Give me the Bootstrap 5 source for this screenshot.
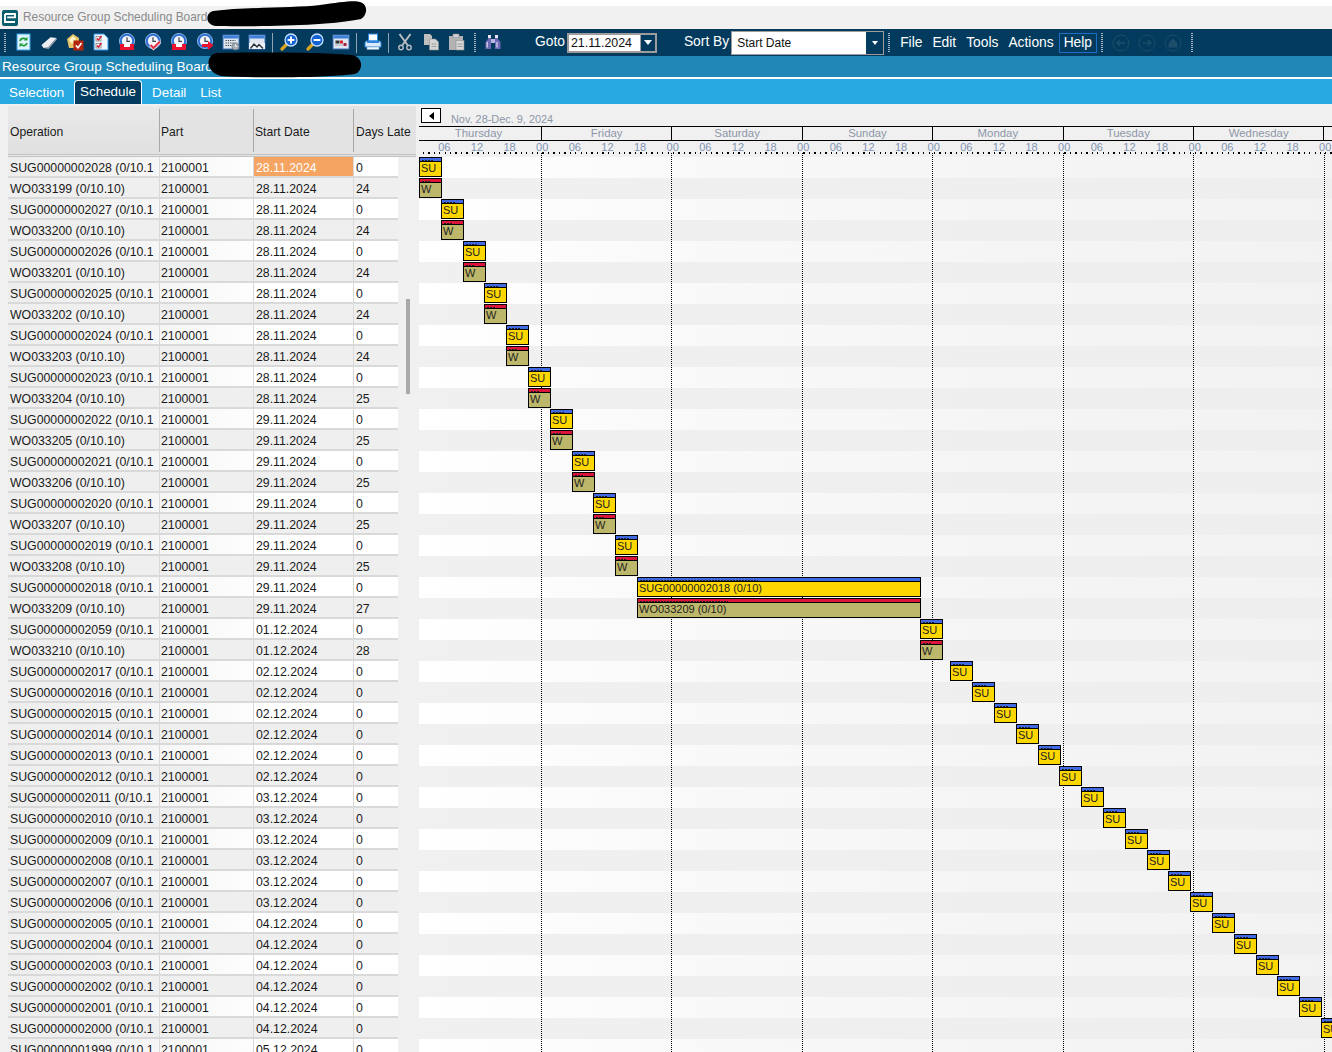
<!DOCTYPE html>
<html lang="en"><head><meta charset="utf-8"><title>Resource Group Scheduling Board</title>
<link href="https://cdn.jsdelivr.net/npm/bootstrap@5.3.0/dist/css/bootstrap.min.css" rel="stylesheet">
<style>
html,body{height:1052px;overflow:hidden}
body{background:#f0f0f0;font-family:"Liberation Sans",Arial,sans-serif;font-size:12px;color:#111;position:relative}
.topgap{height:6px;background:#fff}
.titlebar{height:23px;background:#f1f1f1;color:#8a8a8a;font-size:11.9px;padding-left:2px;gap:5px}
.titlebar span{padding-top:1px}
.toolbar{height:27px;background:#023b5e;color:#fff;font-size:13.8px;white-space:nowrap}
.grip{width:2px;height:20px;flex:none;background:repeating-linear-gradient(#aab8c4 0 1px,transparent 1px 2px)}
.tsep{width:1px;height:20px;background:#8fa3b2;flex:none;margin:0 3px 0 2px}
.tbtn{width:26px;flex:none;display:flex;justify-content:center}
.tbtn svg{width:18px;height:18px}
.gotobox{width:90px;height:20px;border:2px solid #9c9c9c;background:#fff;color:#111;font-size:12.4px;margin-left:2px}
.gotobox span.val{flex:1;padding-left:2px;line-height:16px}
.ddbtn{width:15px;background:#023b5e;display:flex;align-items:center;justify-content:center;border-left:1px solid #9c9c9c}
.ddbtn i{display:block;border:4px solid transparent;border-top:5px solid #fff;border-bottom:0}
.sortbox{width:153px;height:24px;border:1px solid #9c9c9c;background:#fff;color:#111;font-size:12px;margin-left:2px}
.sortbox span.val{flex:1;padding-left:5px;line-height:23px}
.sortbox .ddbtn{width:17px;border:0}
.sortbox .ddbtn i{border-width:3px;border-top-width:4px}
.mnu{padding:0 5px;line-height:20px}
.mnu.first{margin-left:-1px}
.mnu.hot{border:1px solid #1a6fc4;padding:0 4px;margin-left:0;line-height:18px}
.band{height:21px;background:#2187b7;color:#fff;font-size:13.6px;line-height:21px;padding-left:2px}
.whiteline{height:2px;background:#fff}
.tabbar{height:25px;background:#29a9e2;color:#fff;font-size:13.4px;padding-left:4px}
.tabbar .tabi{padding:5px 5px 0;line-height:18px}
.tabbar .tabi.on{background:#023b5e;border:1px solid #fff;border-bottom:0;border-radius:4px 4px 0 0;padding:1px 5px 0;line-height:20px;margin:1px 5px 0 5px;width:68px}
.tabbar .tabi.lastt{margin-left:4px}
.mainarea{height:948px;overflow:hidden}
.leftpane{width:408px;margin-left:8px;flex:none;position:relative}
.gridtbl{table-layout:fixed;width:408px;margin:2px 0 0;border-collapse:separate;border-spacing:0;--bs-table-bg:transparent;font-size:12.3px;color:#1a1a1a}
.gridtbl>*>*>*{white-space:nowrap;overflow:hidden;box-shadow:none}
.gridtbl thead th.hcell{height:51px;padding:4px 0 0 2px;background:#e3e3e3;font-weight:400;font-size:12.15px;vertical-align:middle;position:relative;border:0;border-bottom:3px double #c2c2c2}
.gridtbl thead th.hcell:first-child{background:linear-gradient(#e9e9e9,#e0e0e0)}
.gridtbl thead th.hcell:last-child{padding-left:3px}
.gridtbl thead th.hcell+th::before{content:"";position:absolute;left:0;top:3px;bottom:2px;width:1px;background:#a8a8a8}
.gridtbl tbody td{height:21px;line-height:16px;padding:3px 0 0 2px;border:0;border-bottom:2px solid #d9d9d9;border-left:1px solid #d9d9d9;color:#1a1a1a}
.gridtbl tbody td:first-child{border-left:0}
.gridtbl tbody td:nth-child(2){padding-left:1px}
.gridtbl tbody tr:nth-child(odd) td{background:#fff}
.gridtbl tbody tr:nth-child(odd) td:first-child{background:linear-gradient(90deg,#ededed,#f6f6f6)}
.gridtbl tbody tr:nth-child(odd) td:nth-child(2){background:linear-gradient(90deg,#f6f6f6,#fdfdfd)}
.gridtbl tbody tr:nth-child(even) td{background:#efefef}
.gridtbl tbody td.hotcell,.gridtbl tbody tr:nth-child(odd) td.hotcell{background:#f5a561;color:#fff}
.gridtbl tbody tr>td.blank,.gridtbl tbody tr:nth-child(odd) td.blank,.gridtbl tbody tr:nth-child(even) td.blank{background:#f0f0f0;border:0}
.vthumb{position:absolute;left:398px;top:195px;width:4px;height:95px;background:#a9a9a9}
.chartpane{width:913px;flex:none;margin-left:3px;overflow:hidden;position:relative}
.charttop{height:22px;padding-top:4px;gap:10px;color:#8d96a8;font-size:10.9px}
.backbtn{width:20px;height:15px;margin-left:2px;background:#fff;border:1px solid #000;display:flex;align-items:center;justify-content:center}
.backbtn i{display:block;border:4px solid transparent;border-right:5px solid #000;border-left:0}
.daterange{padding-top:4px;line-height:14px}
.dayrow{height:15px;border-top:1px solid #000;border-bottom:1px solid #000;color:#8d96a8;font-size:11.4px;line-height:13px;white-space:nowrap}
.dayc{flex:0 0 130.4px;text-align:center;border-left:1px solid #000}
.dayc.first{flex:0 0 122px;border-left:0;padding-right:3px}
.hrrow{height:11px;padding-left:9px;color:#7f94b4;font-size:11px;line-height:12px;white-space:nowrap}
.hrc{flex:0 0 32.625px;text-align:center}
.tickrow{height:2px;background:repeating-linear-gradient(90deg,#000 0 1.3px,transparent 1.3px 5.4375px);background-position:-7px 0}
.chartgap{height:3px}
.stripe{height:21px}
.stripe.lt{background:linear-gradient(90deg,#fff,#f9f9f9 30%,#f5f5f5 65%,#f2f2f2)}
.stripe.dk{background:linear-gradient(90deg,#f0f0f0,#eeeeee)}
.dayline{position:absolute;top:49px;bottom:0;border-left:1px dotted #000;width:0}
.gbar{position:absolute;height:20px;background:#000;padding:1px;display:flex;flex-direction:column;gap:1px;overflow:hidden;color:#222;font-size:11px}
.gstrip{height:3px;overflow:hidden;padding:2px 0 0 2px}
.gmark{height:1px;background:repeating-linear-gradient(90deg,#222 0 2px,transparent 2px 3px)}
.gbody{flex:1;padding-left:1px;line-height:13px;white-space:nowrap;overflow:hidden}
.su .gstrip{background:#4169e1}.su .gbody{background:#ffd700}
.wo .gstrip{background:#dc143c}.wo .gbody{background:#bdb76b}
.blob{position:absolute;left:205px;width:165px;pointer-events:none}
</style></head>
<body>
<svg width="0" height="0" class="position-absolute">
<defs>
<symbol id="clk" viewBox="0 0 18 18"><circle cx="9" cy="8" r="7.6" fill="#2c6ed2" stroke="#a9c8ee" stroke-width=".8"/><circle cx="9" cy="8" r="5.2" fill="#f4f6fa"/><path d="M9 4.2V8.4H12" fill="none" stroke="#39424e" stroke-width="1.2"/></symbol>
<symbol id="win" viewBox="0 0 18 18"><rect x="1" y="2" width="16" height="14" fill="#dfe6f0" stroke="#3d6eb4"/><rect x="1.5" y="2.5" width="15" height="3" fill="#3d7fd8"/></symbol>
<symbol id="mag" viewBox="0 0 18 18"><path d="M6.5 11.5 2 16" stroke="#d9a520" stroke-width="3.2" stroke-linecap="round"/><circle cx="11" cy="7" r="6" fill="#1462d2" stroke="#c5e2ff" stroke-width="1.3"/></symbol>
</defs></svg>
<div class="topgap"></div>
<div class="titlebar d-flex align-items-center">
 <svg width="16" height="16" viewBox="0 0 16 16"><rect width="16" height="16" rx="2" fill="#0a5d6b"/><path d="M3 4h10v3.4H5.2M3 4v8h10" fill="none" stroke="#fff" stroke-width="1.9"/></svg>
 <span>Resource Group Scheduling Board:</span>
</div>
<div class="toolbar d-flex align-items-center">
 <div class="grip ms-1 me-1"></div>
 <div class="d-flex">
 <div class="tbtn"><svg viewBox="0 0 18 18"><rect x="3" y="1" width="13" height="16" fill="#dff2ff" stroke="#3aa3ea"/><path d="M6 8a3.5 3.5 0 0 1 6-1.5M13 10a3.5 3.5 0 0 1-6 1.5" fill="none" stroke="#1f9d35" stroke-width="1.8"/><path d="M13.5 3.8v3.8H9.8zM5.5 14.2v-3.8h3.7z" fill="#1f9d35"/></svg></div>
 <div class="tbtn"><svg viewBox="0 0 18 18"><path d="M1.5 12 10.5 4.2 16.5 5 8 14.6 3.5 15z" fill="#eceef2"/><path d="M3.5 15 8 14.6 16.5 5l.3 1.6L8.5 16z" fill="#9ea5ae"/></svg></div>
 <div class="tbtn"><svg viewBox="0 0 18 18"><path d="M1 6 7 1l6 4v10H3z" fill="#e8c468"/><path d="M3 7l4-4 3 3-4 5z" fill="#fff3c8"/><rect x="7.5" y="7.5" width="10" height="10" fill="#b3250f"/><path d="M9.8 12.4 12 14.8 15.5 10" fill="none" stroke="#fff" stroke-width="1.6"/></svg></div>
 <div class="tbtn"><svg viewBox="0 0 18 18"><path d="M2 1h10l4 4v12H2z" fill="#f2f8ff" stroke="#2f95e6"/><rect x="4" y="3.5" width="5" height="4.5" fill="#fff" stroke="#555" stroke-width=".6"/><rect x="4" y="10.5" width="5" height="4.5" fill="#fff" stroke="#555" stroke-width=".6"/><path d="M4.8 5.5 6.5 7 9.5 2.8M4.8 12.5 6.5 14 9.5 9.8" fill="none" stroke="#d4142a" stroke-width="1.4"/></svg></div>
 <div class="tbtn"><svg viewBox="0 0 18 18"><use href="#clk"/><path d="M2 11h14v6H2z" fill="#ea1230"/><rect x="6" y="11" width="6" height="3" fill="#fff"/></svg></div>
 <div class="tbtn"><svg viewBox="0 0 18 18"><use href="#clk"/><path d="M6.5 12 9.5 15 16 8.5" fill="none" stroke="#fff" stroke-width="3.6"/><path d="M6.5 12 9.5 15 16 8.5" fill="none" stroke="#e0344a" stroke-width="2.2"/></svg></div>
 <div class="tbtn"><svg viewBox="0 0 18 18"><use href="#clk"/><path d="M2 11h14v6H2z" fill="#ea1230"/><rect x="6" y="11" width="6" height="3" fill="#fff"/></svg></div>
 <div class="tbtn"><svg viewBox="0 0 18 18"><use href="#clk"/><path d="M6 11h6V8l5.5 4.5L12 17v-3H6z" fill="#ea1230"/></svg></div>
 <div class="tbtn"><svg viewBox="0 0 18 18"><use href="#win"/><path d="M3.5 7.5h10M3.5 10h10M3.5 12.5h8" stroke="#444" stroke-width="1.2" stroke-dasharray="1.3 1"/><circle cx="13.5" cy="13.5" r="3.6" fill="#a4adb8" stroke="#5e6670" stroke-width=".6"/><path d="M13.5 11.5v2h1.6" fill="none" stroke="#fff" stroke-width=".8"/></svg></div>
 <div class="tbtn"><svg viewBox="0 0 18 18"><use href="#win"/><rect x="1" y="10" width="16" height="6" fill="#eef2f7"/><path d="M2.5 15.5 6 11l3 3 2-2.5 4 4" fill="none" stroke="#2b2f38" stroke-width="1.4"/></svg></div>
 <div class="tsep"></div>
 <div class="tbtn"><svg viewBox="0 0 18 18"><use href="#mag"/><path d="M7.6 7h6.8M11 3.6v6.8" stroke="#fff" stroke-width="2"/></svg></div>
 <div class="tbtn"><svg viewBox="0 0 18 18"><use href="#mag"/><path d="M7.6 7h6.8" stroke="#fff" stroke-width="2"/></svg></div>
 <div class="tbtn"><svg viewBox="0 0 18 18"><use href="#win"/><rect x="3.5" y="7.5" width="4" height="3" fill="#333"/><rect x="8" y="7.5" width="3" height="3" fill="#d7222f"/><rect x="11.5" y="10" width="3" height="3" fill="#a02038"/><path d="M3.5 12h7" stroke="#777" stroke-dasharray="1 1"/></svg></div>
 <div class="tsep"></div>
 <div class="tbtn"><svg viewBox="0 0 18 18"><rect x="4.5" y="1" width="9" height="7" fill="#fff" stroke="#2d85dc"/><path d="M1 10q0-2 2-2h12q2 0 2 2v4H1z" fill="#dce9f8" stroke="#2d85dc"/><rect x="3" y="8" width="12" height="2" fill="#2d85dc"/><rect x="3" y="14" width="12" height="2.5" fill="#f5f8fc" stroke="#7aa9d8" stroke-width=".6"/></svg></div>
 <div class="tsep"></div>
 <div class="tbtn"><svg viewBox="0 0 18 18"><path d="M3.5 1 11.5 12M14.5 1 6.5 12" stroke="#b9bdc2" stroke-width="2" fill="none"/><circle cx="5" cy="14.5" r="2.2" fill="none" stroke="#b9bdc2" stroke-width="1.4"/><circle cx="13" cy="14.5" r="2.2" fill="none" stroke="#b9bdc2" stroke-width="1.4"/></svg></div>
 <div class="tbtn"><svg viewBox="0 0 18 18"><path d="M2 1h6l2 2v9H2z" fill="#bfbfbf"/><path d="M7.5 6h6l3 3v8h-9z" fill="#d6d6d6" stroke="#8e8e8e" stroke-width=".6"/><path d="M9.5 11h5M9.5 13.5h5" stroke="#8e8e8e" stroke-width=".8"/></svg></div>
 <div class="tbtn"><svg viewBox="0 0 18 18"><rect x="1" y="3" width="14" height="14" fill="#b2b2b2"/><rect x="5" y="1" width="6" height="3.5" fill="#d0d0d0" stroke="#8a8a8a" stroke-width=".5"/><path d="M8 7.5h8v9.5H8z" fill="#d8d8d8" stroke="#8e8e8e" stroke-width=".6"/><path d="M9.5 11h5M9.5 13.5h5" stroke="#8e8e8e" stroke-width=".8"/></svg></div>
 <div class="grip" style="margin:0 4px"></div>
 <div class="tbtn"><svg viewBox="0 0 18 18"><path d="M1.5 16V9L4 6V2h3v14zM16.5 16V9L14 6V2h-3v14z" fill="#6d69b4"/><rect x="4" y="2" width="3" height="3" fill="#e4e4f4"/><rect x="11" y="2" width="3" height="3" fill="#e4e4f4"/><path d="M3.2 9v5.5M13 9v5.5" stroke="#dcdcf0" stroke-width="1.2"/><rect x="7" y="6" width="4" height="4" fill="#b6b6de"/></svg></div>
 </div>
 <span style="margin-left:29px">Goto</span>
 <div class="gotobox d-flex"><span class="val">21.11.2024</span><span class="ddbtn"><i></i></span></div>
 <span style="margin-left:27px">Sort By</span>
 <div class="sortbox d-flex"><span class="val">Start Date</span><span class="ddbtn"><i></i></span></div>
 <div class="grip" style="margin-left:4px;margin-right:6px"></div>
 <div class="d-flex align-items-center">
  <span class="mnu first">File</span><span class="mnu">Edit</span><span class="mnu">Tools</span><span class="mnu">Actions</span><span class="mnu hot">Help</span>
 </div>
 <div class="grip ms-1"></div>
 <div class="d-flex" style="margin-left:9px;gap:8px">
  <svg width="18" height="18" viewBox="0 0 18 18"><circle cx="9" cy="9" r="8" fill="none" stroke="#1c4d69"/><path d="M13 9H5M8 6 5 9l3 3" fill="none" stroke="#1c4d69" stroke-width="1.4"/></svg>
  <svg width="18" height="18" viewBox="0 0 18 18"><circle cx="9" cy="9" r="8" fill="none" stroke="#1c4d69"/><path d="M5 9h8M10 6l3 3-3 3" fill="none" stroke="#1c4d69" stroke-width="1.4"/></svg>
  <svg width="18" height="18" viewBox="0 0 18 18"><circle cx="9" cy="9" r="8" fill="none" stroke="#1c4d69"/><path d="M4.5 9 9 4.5 13.5 9v4.5h-9z" fill="#1c4d69"/></svg>
 </div>
 <div class="grip" style="margin-left:9px"></div>
</div>
<div class="band">Resource Group Scheduling Board</div>
<div class="whiteline"></div>
<nav class="tabbar d-flex">
 <span class="tabi">Selection</span><span class="tabi on">Schedule</span><span class="tabi">Detail</span><span class="tabi lastt">List</span>
</nav>
<main class="mainarea d-flex">
 <div class="leftpane">
  <table class="table gridtbl">
   <colgroup><col style="width:151px"><col style="width:94px"><col style="width:100px"><col style="width:45px"><col style="width:18px"></colgroup>
   <thead><tr><th class="hcell">Operation</th><th class="hcell">Part</th><th class="hcell">Start Date</th><th class="hcell" colspan="2">Days Late</th></tr></thead>
   <tbody id="rows"></tbody>
  </table>
  <div class="vthumb"></div>
 </div>
 <div class="chartpane">
  <div class="charttop d-flex"><span class="backbtn"><i></i></span><span class="daterange">Nov. 28-Dec. 9, 2024</span></div>
  <div class="dayrow d-flex" id="days"></div>
  <div class="hrrow d-flex" id="hours"></div>
  <div class="tickrow"></div>
  <div class="chartgap"></div>
  <div id="stripes"></div>
  <div id="lines"></div>
  <div id="bars"></div>
 </div>
</main>
<svg class="blob" style="top:0;height:28px" viewBox="0 0 165 28"><path d="M8 11C40 7 90 8 115 5C135 2 150 0 155 2C163 4 163 15 156 19C130 25 60 27 15 26C-1 27 0 13 8 11Z" fill="#000"/></svg>
<svg class="blob" style="top:52px;height:26px" viewBox="0 0 165 26"><path d="M12 1C50 0 120 0 147 3C158 5 159 18 150 22C120 26 50 26 16 24C0 20 0 3 12 1Z" fill="#000"/></svg>
<script>
function sugId(n){return "SUG"+("00000000000"+n).slice(-11)+" (0/10.1";}
var rows=[];
var late=[24,24,24,24,24,25,25,25,25,25,27,28];
var sug=[2028,2027,2026,2025,2024,2023,2022,2021,2020,2019,2018,2059];
var d=["28.11.2024","28.11.2024","28.11.2024","28.11.2024","28.11.2024","28.11.2024","29.11.2024","29.11.2024","29.11.2024","29.11.2024","29.11.2024","01.12.2024"];
for(var i=0;i<12;i++){
 rows.push([sugId(sug[i]),d[i],"0"]);
 rows.push(["WO033"+(199+i)+" (0/10.10)",d[i],String(late[i])]);
}
var n=2017;
[["02.12.2024",6],["03.12.2024",6],["04.12.2024",6],["05.12.2024",1]].forEach(function(g){
 for(var k=0;k<g[1];k++){rows.push([sugId(n--),g[0],"0"]);}
});
document.getElementById("rows").innerHTML=rows.map(function(r,i){
 return "<tr><td>"+r[0]+"</td><td>2100001</td><td"+(i==0?' class="hotcell"':'')+">"+r[1]+"</td><td>"+r[2]+"</td><td class='blank'></td></tr>";}).join("");
var names=["Thursday","Friday","Saturday","Sunday","Monday","Tuesday","Wednesday","Thursday"];
document.getElementById("days").innerHTML=names.map(function(nm,i){return '<div class="dayc'+(i==0?' first':'')+'">'+nm+'</div>';}).join("");
var h="";for(i=1;i<=28;i++){h+='<span class="hrc">'+["00","06","12","18"][i%4]+'</span>';}
document.getElementById("hours").innerHTML=h;
var s="";for(i=0;i<43;i++){s+='<div class="stripe '+(i%2?'dk':'lt')+'"></div>';}
document.getElementById("stripes").innerHTML=s;
var l="";[541,671,802,932,1063,1193,1324].forEach(function(x){l+='<div class="dayline" style="left:'+(x-419)+'px"></div>';});
document.getElementById("lines").innerHTML=l;
var xs=[419,441,463,484,506,528,550,572,593,615];
var b="";
function bar(cls,x,w,i,label,mw){b+='<div class="gbar '+cls+'" style="left:'+(x-419)+'px;width:'+w+'px;top:'+(53+21*i)+'px"><div class="gstrip"><div class="gmark" style="width:'+mw+'px"></div></div><div class="gbody">'+label+'</div></div>';}
xs.forEach(function(x,k){bar("su",x,23,k*2,"SU",12);bar("wo",x,23,k*2+1,"W",9);});
bar("su",637,284,20,"SUG00000002018 (0/10)",118);bar("wo",637,284,21,"WO033209 (0/10)",88);
bar("su",920,23,22,"SU",12);bar("wo",920,23,23,"W",9);
[950,972,994,1016,1038,1059,1081,1103,1125,1147,1168,1190,1212,1234,1256,1277,1299,1321].forEach(function(x,k){bar("su",x,23,24+k,"SU",12);});
document.getElementById("bars").innerHTML=b;
</script>
<script src="https://cdn.jsdelivr.net/npm/bootstrap@5.3.0/dist/js/bootstrap.bundle.min.js"></script>
</body></html>
